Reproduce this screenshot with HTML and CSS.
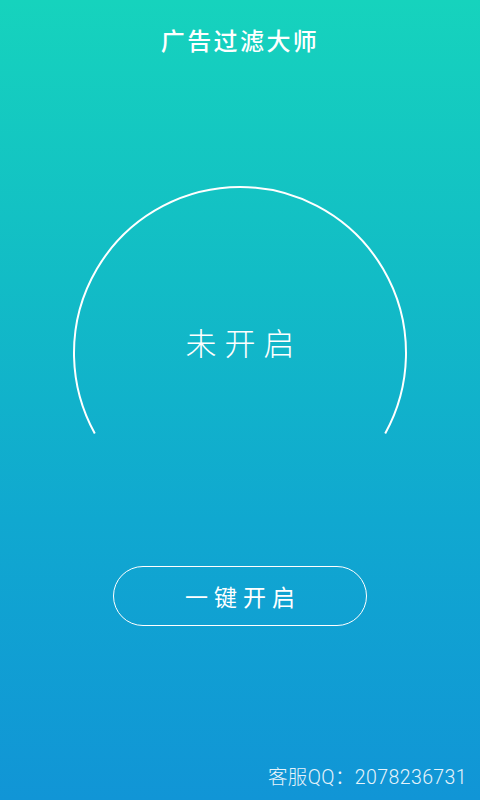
FILE: index.html
```html
<!DOCTYPE html>
<html lang="zh-CN">
<head>
<meta charset="utf-8">
<title>广告过滤大师</title>
<link rel="stylesheet" href="styles.css">
</head>
<body>
<div class="screen">
  <header class="title">广告过滤大师</header>
  <div class="gauge">
    <svg class="arc" width="336" height="254" viewBox="0 0 336 254">
      <path d="M22.8 248.5 A166 166 0 1 1 313.2 248.5" fill="none" stroke="#ffffff" stroke-width="2"/>
    </svg>
    <div class="status">未开启</div>
  </div>
  <button class="start">一键开启</button>
  <footer class="service">客服QQ：2078236731</footer>
</div>
</body>
</html>
```
FILE: styles.css
```css
html, body {
  margin: 0;
  padding: 0;
}
body {
  width: 480px;
  height: 800px;
  overflow: hidden;
  font-family: "Noto Sans CJK SC", "Noto Sans", sans-serif;
  color: #ffffff;
}
.screen {
  height: 800px;
  display: flex;
  flex-direction: column;
  align-items: center;
  background: linear-gradient(180deg, #16d3bd 0%, #12bcc6 35%, #10a8d0 65%, #1195d6 100%);
}
.title {
  height: 80px;
  line-height: 80px;
  font-size: 24px;
  letter-spacing: 2.4px;
  font-weight: 500;
}
.gauge {
  margin-top: 105px;
  width: 336px;
  height: 254px;
  display: grid;
}
.arc {
  grid-area: 1 / 1;
  display: block;
}
.status {
  grid-area: 1 / 1;
  align-self: start;
  justify-self: center;
  margin-top: 137px;
  height: 40px;
  line-height: 40px;
  font-size: 31px;
  font-weight: 300;
  letter-spacing: 8px;
  padding-left: 8px;
}
.start {
  margin-top: 127px;
  width: 254px;
  height: 60px;
  border: 1.5px solid #ffffff;
  border-radius: 30px;
  background: transparent;
  color: #ffffff;
  font-family: "Noto Sans CJK SC", "Noto Sans", sans-serif;
  font-size: 23px;
  font-weight: 400;
  letter-spacing: 6px;
  padding: 0 0 0 6px;
}
.service {
  margin-top: auto;
  align-self: flex-end;
  margin-right: 13px;
  margin-bottom: 9px;
  font-family: Roboto, "Noto Sans CJK SC", sans-serif;
  font-weight: 300;
  font-size: 19.5px;
  letter-spacing: 0.4px;
  line-height: 26px;
  color: #e6f3fb;
}
```
